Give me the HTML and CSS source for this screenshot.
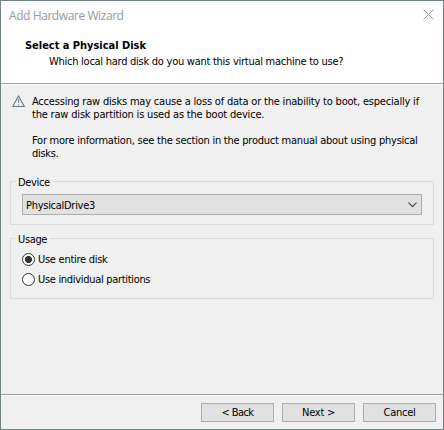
FILE: index.html
```html
<!DOCTYPE html>
<html lang="en">
<head>
<meta charset="utf-8">
<title>Add Hardware Wizard</title>
<link rel="stylesheet" href="styles.css">
</head>
<body>
<main class="dialog">
  <header class="header">
    <div class="titlebar">
      <span class="title">Add Hardware Wizard</span>
      <svg class="close" width="11" height="11" viewBox="0 0 11 11"><path d="M.5.5l10 10M10.5.5l-10 10"/></svg>
    </div>
    <h1 class="heading">Select a Physical Disk</h1>
    <p class="subheading">Which local hard disk do you want this virtual machine to use?</p>
  </header>
  <section class="content">
    <div class="notice">
      <svg class="warning" width="14" height="13" viewBox="0 0 14 13"><path class="outline" d="M6.5 1L12.3 11.5H.7Z"/><path class="mark" d="M6.5 4v4M6.5 9v1.5"/></svg>
      <div class="message">
        <p><span class="line-a">Accessing raw disks may cause a loss of data or the inability to boot, especially if</span><br><span class="line-b">the raw disk partition is used as the boot device.</span></p>
        <p><span class="line-c">For more information, see the section in the product manual about using physical</span><br><span class="line-d">disks.</span></p>
      </div>
    </div>
    <fieldset class="group device">
      <legend>Device</legend>
      <div class="select"><span class="drive">PhysicalDrive3</span><svg width="9" height="6" viewBox="0 0 9 6"><path d="M.5.7l4 4 4-4"/></svg></div>
    </fieldset>
    <fieldset class="group usage">
      <legend>Usage</legend>
      <label class="option"><input class="radio" type="radio" name="usage" checked><span class="entire">Use entire disk</span></label>
      <label class="option"><input class="radio" type="radio" name="usage"><span class="individual">Use individual partitions</span></label>
    </fieldset>
  </section>
  <footer class="footer">
    <button class="button back">&lt; Back</button>
    <button class="button">Next &gt;</button>
    <button class="button">Cancel</button>
  </footer>
</main>
</body>
</html>
```
FILE: styles.css
```css
* { box-sizing: border-box; }
body { margin: 0; }
p, h1 { margin: 0; }
.dialog {
  width: 444px; height: 430px; display: flex; flex-direction: column;
  border: 1px solid #738282; background: #f0f0f0; color: #000;
  font: 11px/13px "DejaVu Sans Condensed", "DejaVu Sans", sans-serif;
  font-stretch: condensed; white-space: nowrap; overflow: hidden;
}
.header { height: 84px; background: #fff; border-bottom: 1px solid #fff; box-shadow: inset 0 -1px #a0a0a0; }
.titlebar { height: 38px; padding: 7px 9px 0 8px; display: flex; justify-content: space-between; }
.title { font: 12px/16px "Open Sans", sans-serif; color: #999; letter-spacing: -.42px; }
.close { margin: 1px 0 0; fill: none; stroke: #999; }
.heading { padding-left: 24px; font-size: 11px; line-height: 13px; font-weight: bold; letter-spacing: -.03px; }
.subheading { padding: 3px 0 0 48px; letter-spacing: -.26px; }
.content { height: 309px; padding: 10px 9px 0; }
.notice { display: flex; height: 80px; padding: 0 0 0 2px; }
.warning { flex: none; margin: 0 6px 0 0; fill: none; }
.outline { stroke: #687580; stroke-width: 1.1; }
.mark { stroke: #8c969e; stroke-width: 1.3; }
.message { display: flex; flex-direction: column; gap: 13px; }
.line-a { letter-spacing: -.2px; }
.line-b { letter-spacing: -.19px; }
.line-c { letter-spacing: -.235px; }
.line-d { letter-spacing: -.3px; }
.group { margin: 0; padding: 0 11px; min-width: 0; border: 1px solid #dcdcdc; }
.group legend { margin-left: -6px; padding: 0 3px 0 2px; height: 13px; line-height: 15px; letter-spacing: -.35px; }
.device { height: 50px; }
.select { height: 21px; margin-top: 6px; padding: 0 4px 0 3px; border: 1px solid #adadad; background: #e1e1e1; display: flex; align-items: center; justify-content: space-between; }
.drive { padding-top: 1px; letter-spacing: -.28px; }
.select svg { fill: none; stroke: #444; stroke-width: 1.1; }
.usage { height: 67px; margin-top: 7px; }
.option { display: flex; align-items: center; height: 20px; gap: 3px; }
.usage legend + .option { margin-top: 4px; }
.entire { letter-spacing: -.27px; }
.individual { letter-spacing: -.31px; }
.radio { appearance: none; width: 13px; height: 13px; margin: 0; border: 1px solid #333; border-radius: 50%; background: #fff; }
.radio:checked { background: radial-gradient(circle, #333 3.2px, #fff 3.8px); }
.footer { height: 35px; padding: 8px 7px 0 0; display: flex; justify-content: flex-end; gap: 8px; border-top: 1px solid #a0a0a0; box-shadow: inset 0 1px #fff; }
.button { width: 73px; height: 19px; padding: 1px 0 0; border: 1px solid #adadad; background: #e1e1e1; color: #000; font: inherit; line-height: 16px; letter-spacing: -.25px; }
.back { letter-spacing: -.6px; }
```
